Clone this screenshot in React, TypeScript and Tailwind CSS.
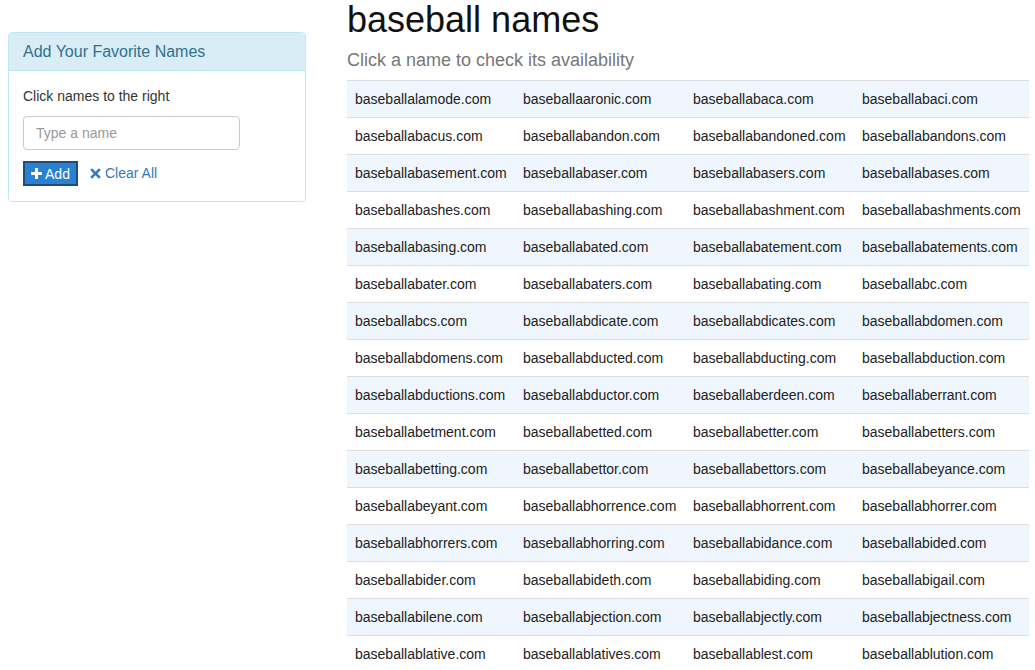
import type { ReactNode } from 'react'

const names: string[][] = [
  ['baseballalamode.com', 'baseballaaronic.com', 'baseballabaca.com', 'baseballabaci.com'],
  ['baseballabacus.com', 'baseballabandon.com', 'baseballabandoned.com', 'baseballabandons.com'],
  ['baseballabasement.com', 'baseballabaser.com', 'baseballabasers.com', 'baseballabases.com'],
  ['baseballabashes.com', 'baseballabashing.com', 'baseballabashment.com', 'baseballabashments.com'],
  ['baseballabasing.com', 'baseballabated.com', 'baseballabatement.com', 'baseballabatements.com'],
  ['baseballabater.com', 'baseballabaters.com', 'baseballabating.com', 'baseballabc.com'],
  ['baseballabcs.com', 'baseballabdicate.com', 'baseballabdicates.com', 'baseballabdomen.com'],
  ['baseballabdomens.com', 'baseballabducted.com', 'baseballabducting.com', 'baseballabduction.com'],
  ['baseballabductions.com', 'baseballabductor.com', 'baseballaberdeen.com', 'baseballaberrant.com'],
  ['baseballabetment.com', 'baseballabetted.com', 'baseballabetter.com', 'baseballabetters.com'],
  ['baseballabetting.com', 'baseballabettor.com', 'baseballabettors.com', 'baseballabeyance.com'],
  ['baseballabeyant.com', 'baseballabhorrence.com', 'baseballabhorrent.com', 'baseballabhorrer.com'],
  ['baseballabhorrers.com', 'baseballabhorring.com', 'baseballabidance.com', 'baseballabided.com'],
  ['baseballabider.com', 'baseballabideth.com', 'baseballabiding.com', 'baseballabigail.com'],
  ['baseballabilene.com', 'baseballabjection.com', 'baseballabjectly.com', 'baseballabjectness.com'],
  ['baseballablative.com', 'baseballablatives.com', 'baseballablest.com', 'baseballablution.com'],
]

function FavoritesPanel(): ReactNode {
  return (
    <div className="mt-[32px] w-[298px] overflow-hidden rounded border border-[#bce8f1] bg-white">
      <div className="h-[38px] border-b border-[#bce8f1] bg-[#d9edf7] px-[14px] pt-[9px] text-[16px] leading-[20px] text-[#31708f]">
        Add Your Favorite Names
      </div>
      <div className="px-[14px] pt-[15px] pb-[15px]">
        <p className="mb-[10px] text-[14px] leading-[20px] text-[#333]">Click names to the right</p>
        <input
          className="block h-[34px] w-[217px] rounded border border-[#ccc] px-[12px] text-[14px] text-[#555] placeholder:text-[#999]"
          placeholder="Type a name"
        />
        <div className="mt-[11px] flex items-center">
          <button className="flex h-[25px] w-[55px] items-center justify-center gap-[3px] border-2 border-[#1c4d7d] bg-[#2a80d1] text-[14px] leading-none text-white">
            <svg width="11" height="11" viewBox="0 0 12 12" fill="white">
              <path d="M4.3 0h3.4v4.3H12v3.4H7.7V12H4.3V7.7H0V4.3h4.3z" />
            </svg>
            Add
          </button>
          <a className="ml-[12px] flex items-center gap-[4px] text-[14px] text-[#337ab7]" href="#">
            <svg width="11" height="11" viewBox="0 0 12 12" fill="#337ab7">
              <path d="M2.3 0.3 6 4l3.7-3.7 2 2L8 6l3.7 3.7-2 2L6 8l-3.7 3.7-2-2L4 6 0.3 2.3z" />
            </svg>
            Clear All
          </a>
        </div>
      </div>
    </div>
  )
}

export default function App(): ReactNode {
  return (
    <div
      className="flex h-[670px] overflow-hidden bg-white text-[#333]"
      style={{ fontFamily: '"Liberation Sans", Arial, sans-serif' }}
    >
      <div className="ml-[8px]">
        <FavoritesPanel />
      </div>
      <div className="ml-[41px] w-[682px]">
        <h1 className="text-[36px] leading-[40px] font-normal text-[#111]">baseball names</h1>
        <p className="mt-[10px] text-[18px] leading-[20px] text-[#777]">
          Click a name to check its availability
        </p>
        <div className="mt-[10px] border-b border-[#ddd]">
          {names.map((row, index) => (
            <div
              key={index}
              className={`grid grid-cols-[168px_170px_169px_175px] border-t border-[#ddd] ${
                index % 2 === 0 ? 'bg-[#eff6fd]' : 'bg-white'
              }`}
            >
              {row.map((name) => (
                <div key={name} className="cursor-pointer p-[8px] text-[14px] leading-[20px] whitespace-nowrap text-[#222]">
                  {name}
                </div>
              ))}
            </div>
          ))}
        </div>
      </div>
    </div>
  )
}
